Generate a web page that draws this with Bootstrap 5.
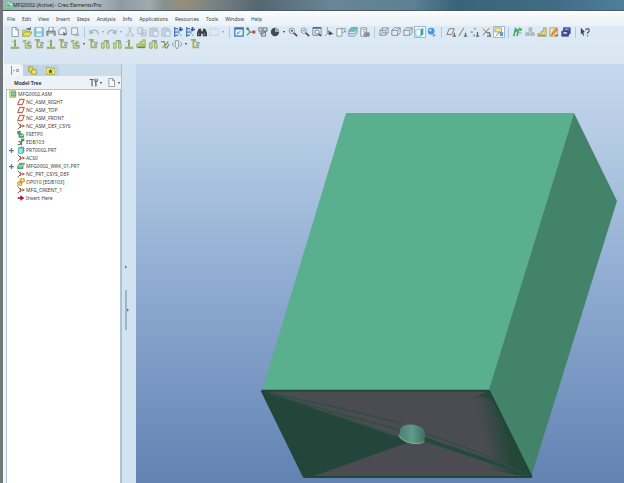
<!DOCTYPE html>
<html lang="en">
<head>
<meta charset="utf-8">
<meta name="viewport" content="width=device-width, initial-scale=1">
<title>MFG0002 (Active) - Creo Elements/Pro</title>
<link href="https://cdn.jsdelivr.net/npm/bootstrap@5.3.0/dist/css/bootstrap.min.css" rel="stylesheet">
<style>
body{font:5px/8px "Noto Sans","Open Sans",sans-serif;color:#333b42;background:#dce8f4;border-left:3px solid #71767a}
button{border:0;background:none;padding:0;color:inherit;font:inherit;line-height:1}
svg{display:block}
.titlebar{height:11px;padding-left:2px;color:#1c2226;border-bottom:1px solid #4b5b66;
 background:linear-gradient(90deg,#9fb2ba 0,#b4c0c4 14%,#8d9ba1 19%,#9fabb0 23.5%,#87908f 26%,#978d78 29.5%,#7d8582 33%,#65747b 38%,#556670 41%,#688596 53%,#5d8094 66%,#38647b 73%,#3f6c85 88%,#4f7e9b 100%)}
.titlebar h1{font-size:5px;line-height:10px;font-weight:400;margin:0}
.menubar{height:15px;padding-left:4px;gap:7px;background:linear-gradient(#fbfcfd,#e9f1f8)}
.menubar a{color:#3b4146;text-decoration:none;line-height:16px}
.tools{height:38px;padding:0 0 0 5px;border-left:1px solid #eef4fa;background:linear-gradient(#deebf6,#d8e6f2)}
.tools .line{height:12px}
.tb{width:12px;height:12px;flex:none}
.tb svg{width:10px;height:10px;margin:1px;opacity:.85}
.tb.on{background:#f8fcff;box-shadow:inset 0 0 0 1px #9bbbd8}
.more{width:6px;height:12px;flex:none}
.more::after,.drop::after{content:"";display:block;width:0;margin:auto;border:1px solid transparent;border-top:2px solid #333;border-bottom:0}
.rule{width:1px;height:11px;margin:0 3px;background:#b3c9dd;flex:none}
.faded{opacity:.45}
.side{width:133px;background:#cfe0ef;border-left:2px solid #f2f6f9;flex:none}
.panel{width:117px;border-right:1px solid #a9bfd3;background:#edf2f6}
.tabs{height:12px;background:#cbdcea}
.tab{width:18px;height:11px;background:#bed3e6;border-radius:2px 4px 0 0;display:flex;align-items:center;justify-content:center}
.tab.active{background:#f0f5f9;height:12px}
.tab svg{width:9px;height:9px}
.head{height:13px;padding:0 0 0 9px}
.head h2{font-size:5px;line-height:12px;font-weight:700;margin:0}
.drop{display:flex;align-items:center;width:14px;height:12px}
.drop svg{width:9px;height:9px}
.tree{margin:0 0 0 1px;padding:0 0 0 2px;list-style:none;background:#fff;border:1px solid #afc4d6;border-bottom:0}
.tree li{height:8px;display:flex;align-items:center;white-space:nowrap;color:#3d4247}
.tree svg{width:8px;height:8px;margin-right:1px;flex:none}
.twist{width:8px;height:8px;flex:none;display:flex;align-items:center}
.kid .twist svg{width:5px;height:5px;margin:0}
.sash{padding-top:201px;background:#d1e2f0}
.sash button{width:5px;display:block;margin-left:3px;color:#536d86}
.sash .grip{height:40px;margin-top:21px;border-left:2px solid #9db5ca}
.nub svg,.grip svg{width:2px;height:4px}
.view{background:linear-gradient(#c4d9ee 0,#b5cbe4 18%,#8ca9d0 55%,#6282b2 100%);overflow:hidden}
</style>
<script src="https://cdn.jsdelivr.net/npm/bootstrap@5.3.0/dist/js/bootstrap.bundle.min.js"></script>
</head>
<body class="d-flex flex-column min-vh-100 overflow-hidden">
<svg width="0" height="0" class="position-absolute" aria-hidden="true">
 <defs>
 <symbol id="new" viewBox="0 0 12 12"><path d="M2.500 .5h5l2.500 3v8h-7.500z" fill="#fff" stroke="#6a7c8e"/><path d="M7 .5v3h3" fill="none" stroke="#6a7c8e"/></symbol>
 <symbol id="open" viewBox="0 0 12 12"><path d="M0 11V4h4l1 1h4v2" fill="#e8d77c" stroke="#8c9830"/><path d="M0 11l3-5h9l-3 5z" fill="#e9df48" stroke="#8c8b20"/><path d="M5 3q2-3 5 0M10 0v3H7" fill="none" stroke="#333"/></symbol>
 <symbol id="save" viewBox="0 0 12 12"><path d="M1 1h10v10H1z" fill="#8ec9db" stroke="#3a90a5"/><path d="M3 1h6v4H3z" fill="#f7ffff"/><path d="M3 8h6v3H3z" fill="#e4f4f6"/></symbol>
 <symbol id="print" viewBox="0 0 12 12"><path d="M3 5l1-5h5l-1 5" fill="#fff" stroke="#666"/><path d="M1 5h10v5H1z" fill="#99a1a7" stroke="#4f5964"/><path d="M3 8h6v3H3z" fill="#ecefec"/></symbol>
 <symbol id="mail" viewBox="0 0 12 12"><path d="M1 9V4l3-3h5l1 5v3z" fill="#edf0f3" stroke="#687480"/><path d="M6 6l5 2-4 3z" fill="#526373"/></symbol>
 <symbol id="sheet" viewBox="0 0 12 12"><path d="M2 1h7v8H2z" fill="#edf4f7" stroke="#7a8b9b"/><path d="M5 8h6v3H5z" fill="#a1adb8"/></symbol>
 <symbol id="undo" viewBox="0 0 12 12"><path d="M2 7c2-5 8-4 9 1v1" fill="none" stroke="#4f6272" stroke-width="1.500"/><path d="M0 3l1 6 5-2z" fill="#4f6272"/></symbol>
 <symbol id="redo" viewBox="0 0 12 12"><path d="M10 7C8 2 2 3 1 8v1" fill="none" stroke="#4f6272" stroke-width="1.500"/><path d="M12 3l-1 6-5-2z" fill="#4f6272"/></symbol>
 <symbol id="cut" viewBox="0 0 12 12"><path d="M4 0l4 8M8 0L4 8" stroke="#596a7a"/><circle cx="3" cy="10" r="1.500" fill="none" stroke="#596a7a"/><circle cx="9" cy="10" r="1.500" fill="none" stroke="#596a7a"/></symbol>
 <symbol id="copy" viewBox="0 0 12 12"><path d="M1 1h6v7H1zM5 4h6v7H5z" fill="#dfe7ee" stroke="#5c6e80"/><path d="M6 7h4M6 9h4" stroke="#5c6e80"/></symbol>
 <symbol id="paste" viewBox="0 0 12 12"><path d="M1 2h9v9H1z" fill="#a8b5c1" stroke="#5c6e80"/><path d="M5 5h6v6H5zM4 0h3v3H4z" fill="#eef3f7" stroke="#5c6e80"/></symbol>
 <symbol id="regen" viewBox="0 0 12 12"><path d="M2 0v12M2 2h4M2 6h4M2 10h4" stroke="#2f62b2" stroke-width="1.500"/><path d="M5 4h3v4H5z" fill="#6ea9dc"/><path d="M9 0v5M7 3h5" stroke="#263b90" stroke-width="2"/><path d="M8 8l2 3" stroke="#579aa0"/></symbol>
 <symbol id="find" viewBox="0 0 12 12"><path d="M2 2h3v3h2V2h3l2 5v4H7V8H5v3H0V7z" fill="#1d232b"/><path d="M2 7v3M9 7v3" stroke="#7f8fa0"/></symbol>
 <symbol id="pick" viewBox="0 0 12 12"><path d="M1 2h10v8H1z" fill="none" stroke="#7c8c99" stroke-dasharray="2 1"/></symbol>
 <symbol id="repaint" viewBox="0 0 12 12"><path d="M1 1h10v10H1z" fill="#eaf6ff" stroke="#2463ae" stroke-width="1.500"/><path d="M1 2h10" stroke="#2457a8" stroke-width="2"/><path d="M9 4L4 9l-1 1 1-3z" fill="#277ccd"/></symbol>
 <symbol id="spin" viewBox="0 0 12 12"><path d="M1 1l4 5-4 4M5 6h4" stroke="#31935b" stroke-width="1.500" fill="none"/><circle cx="9.500" cy="6" r="2" fill="#ba3030"/><circle cx="2" cy="2" r="1.500" fill="#315e53"/></symbol>
 <symbol id="orient" viewBox="0 0 12 12"><path d="M1 1h4v4H1zM6 1h5v4H6zM4 6h5v5H4z" fill="#d1d9df" stroke="#4c5d69"/><path d="M2 7l3 2 5-5" stroke="#334758" fill="none"/></symbol>
 <symbol id="ball" viewBox="0 0 12 12"><circle cx="6" cy="6" r="5" fill="#262f3a"/><path d="M6 1a5 5 0 0 1 5 5H6z" fill="#91a1af"/></symbol>
 <symbol id="zin" viewBox="0 0 12 12"><circle cx="4.500" cy="4.500" r="3.200" fill="#f4faff" stroke="#61758a"/><path d="M7 7l4 4" stroke="#4b2730" stroke-width="2"/><path d="M3 4.500h3M4.500 3v3" stroke="#222"/></symbol>
 <symbol id="zout" viewBox="0 0 12 12"><circle cx="4.500" cy="4.500" r="3.200" fill="#f4faff" stroke="#61758a"/><path d="M7 7l4 4" stroke="#4b2730" stroke-width="2"/><path d="M3 4.500h3" stroke="#222"/></symbol>
 <symbol id="refit" viewBox="0 0 12 12"><path d="M1 1h10v9H1z" fill="#e3eef8" stroke="#496d97"/><path d="M1 1h10" stroke="#31577d" stroke-width="2"/><circle cx="6" cy="6" r="2.500" fill="#fff" stroke="#365d88"/><path d="M8 8l3 3" stroke="#222" stroke-width="1.500"/></symbol>
 <symbol id="axes" viewBox="0 0 12 12"><path d="M4 0v8h7M4 8l-3 3" fill="none" stroke="#6a7f8a"/><path d="M5 4l6 4-5 2z" fill="#243947"/></symbol>
 <symbol id="views" viewBox="0 0 12 12"><path d="M1 2h6v9H1z" fill="#fff" stroke="#6c7f90"/><path d="M7 2h4v4M8 7l2-2 2 2" stroke="#33506e" fill="none" stroke-dasharray="2 1"/></symbol>
 <symbol id="layer" viewBox="0 0 12 12"><path d="M1 5l3-4h7v6l-3 4H1z" fill="#d4ecec" stroke="#5c8e9f"/><path d="M1 5l3-4h7L8 5z" fill="#62bdb7" stroke="#4c8e9f"/><path d="M1 8h7l3-4" fill="none" stroke="#5c8e9f"/></symbol>
 <symbol id="mgr" viewBox="0 0 12 12"><path d="M1 1h7v10H1z" fill="#f6f7f6" stroke="#6d7880"/><path d="M3 3h4M3 5h4" stroke="#8a9aaa"/><path d="M5 7h6v4H5z" fill="#9aa8a8" stroke="#5a6870"/><path d="M7 9h3" stroke="#972f2f"/></symbol>
 <symbol id="cube" viewBox="0 0 12 12"><path d="M1 4l3-3h7v6l-3 3H1zM1 4h7v6M8 4l3-3M4 1v6h7M4 7l-3 3" fill="none" stroke="#71808a"/></symbol>
 <symbol id="hidden" viewBox="0 0 12 12"><path d="M1 4l3-3h7v6l-3 3H1zM1 4h7v6M8 4l3-3" fill="#e7eef3" stroke="#65747f"/></symbol>
 <symbol id="shade" viewBox="0 0 12 12"><path d="M1 3h6v8H1z" fill="#f6ffff" stroke="#52b4c3"/><path d="M7 3l3-2v8l-3 2z" fill="#1e9395"/><path d="M1 3l3-2h6L7 3z" fill="#b4ebed"/></symbol>
 <symbol id="blue" viewBox="0 0 12 12"><circle cx="5" cy="5" r="4" fill="#2489e3"/><circle cx="4" cy="4" r="1.500" fill="#b3e1ff"/><path d="M7 8l4 2-4 2z" fill="#7892a8"/></symbol>
 <symbol id="dplane" viewBox="0 0 12 12"><path d="M1 9l3-7h6L7 9z" fill="none" stroke="#8b6a55" stroke-width="1.200"/><path d="M8 11h4M10 7v4" stroke="#305f59" stroke-width="1.500"/></symbol>
 <symbol id="daxis" viewBox="0 0 12 12"><path d="M1 11L7 1" stroke="#776253" stroke-width="1.200"/><path d="M7 11h4M9 7v4" stroke="#305f59" stroke-width="1.500"/></symbol>
 <symbol id="dpoint" viewBox="0 0 12 12"><path d="M1 5l2 2M3 5L1 7M5 1l2 2M7 1L5 3M4 9l2 2M6 9l-2 2" stroke="#776253"/><path d="M7 11h4M9 6v5" stroke="#305f59" stroke-width="1.500"/></symbol>
 <symbol id="dcsys" viewBox="0 0 12 12"><path d="M1 10l8-9M1 2l5 5" stroke="#776253" stroke-width="1.200"/><path d="M6 11h5M6 7h3l1 4" stroke="#305f59" stroke-width="1.500" fill="none"/></symbol>
 <symbol id="note" viewBox="0 0 12 12"><path d="M1 1h8v5H1z" fill="#f4e08a" stroke="#9c9050"/><path d="M7 6h4v5H7z" fill="#568bc1"/><path d="M2 11l5-5" stroke="#456"/></symbol>
 <symbol id="play" viewBox="0 0 12 12"><path d="M1 11l2-9 3 3-1 6M3 5l6-3" stroke="#2d9f49" stroke-width="2" fill="none"/><path d="M7 1l4 2-3 2M7 7h3" fill="#34a8bd" stroke="#2f9e43"/></symbol>
 <symbol id="people" viewBox="0 0 12 12"><path d="M5 1h3v4H5zM1 7h4v3H1zM7 7h4v3H7z" fill="#c2cad0" stroke="#89949b"/></symbol>
 <symbol id="steps" viewBox="0 0 12 12"><path d="M1 11V8h4V5h3V1h3v10z" fill="#e2d274" stroke="#93904e"/><path d="M2 10h8" stroke="#2f7f8e"/></symbol>
 <symbol id="edit" viewBox="0 0 12 12"><path d="M1 1h9v10H1z" fill="#f5e6a0" stroke="#a09040"/><path d="M10 3L5 9l-2 1 1-3 4-5z" fill="#ef993c" stroke="#ab4e2d"/><path d="M7 9h4v2H7z" fill="#c84b35"/></symbol>
 <symbol id="disk" viewBox="0 0 12 12"><path d="M3 1h8v7H3z" fill="#34459c" stroke="#1e2a70"/><path d="M1 5h8v6H1z" fill="#26388d" stroke="#19235f"/><path d="M3 6h4v2H3zM5 2h4v1H5z" fill="#c7d3f2"/></symbol>
 <symbol id="help" viewBox="0 0 12 12"><path d="M1 1l5 5-2 .5L5 10l-1 .5-1.500-3L1 9z" fill="#222a5c"/><path d="M7 4q0-2 2-2t2 2-2 3v1M9 10v1" fill="none" stroke="#512b6b" stroke-width="1.500"/></symbol>
 <symbol id="mill1" viewBox="0 0 12 12"><path d="M1 9h10v2H1z" fill="#c2bb39"/><path d="M6 1v8" stroke="#558e3a" stroke-width="2"/><path d="M2 3h4v2" stroke="#b2b052" fill="none"/><path d="M1 11h10" stroke="#62803f"/></symbol>
 <symbol id="mill2" viewBox="0 0 12 12"><path d="M1 2l3 4v5h7V8H7V6l3-4" fill="#c8d690" stroke="#6e9b42"/><path d="M6 5h5M7 8h4" stroke="#467f68"/><path d="M2 2h3" stroke="#a69831" stroke-width="1.500"/></symbol>
 <symbol id="mill3" viewBox="0 0 12 12"><path d="M1 1h5v2H4v7h7" fill="none" stroke="#a5a239" stroke-width="2"/><path d="M7 4h4v2H8v2h3" fill="none" stroke="#4a8c6c"/></symbol>
 <symbol id="mill4" viewBox="0 0 12 12"><path d="M1 10V6h4V3h3V1h3v9z" fill="#d8cf53" stroke="#8a9b3b"/><path d="M2 10h9" stroke="#417f5b" stroke-width="2"/><path d="M5 7h5" stroke="#4f998d"/></symbol>
 <symbol id="mill5" viewBox="0 0 12 12"><path d="M1 5h4V2h3v3h3M2 5v6h3V6M8 5v6h3V6" fill="#dedb7c" stroke="#6e953d"/><path d="M7 2h3v3" fill="none" stroke="#396d84"/></symbol>
 <symbol id="turn" viewBox="0 0 12 12"><path d="M1 3h4l1 5 4-5M4 8l4 3 3-5" fill="none" stroke="#6e8051" stroke-width="1.500"/><path d="M2 9h4v2H2z" fill="#cbbb49"/></symbol>
 <symbol id="drill" viewBox="0 0 12 12"><path d="M4 2h4v7l-2 3-2-3z" fill="#edf1f0" stroke="#6b7d88"/><path d="M2 4L0 6l2 3M10 4l2 2-2 3" fill="none" stroke="#6b7d88"/></symbol>
 <symbol id="asm" viewBox="0 0 12 12"><path d="M1 1h9v10H1z" fill="#f0e275" stroke="#a89e36"/><path d="M4 3h6v6H4z" fill="#84cbc5" stroke="#348e91"/></symbol>
 <symbol id="plane" viewBox="0 0 12 12"><path d="M1 10l3-8h7l-3 8z" fill="#fff6f0" stroke="#a54736" stroke-width="1.400"/></symbol>
 <symbol id="csys" viewBox="0 0 12 12"><path d="M1 1l5 5-5 5M5 6h6M5 3v6" fill="none" stroke="#a34c39" stroke-width="1.400"/><path d="M8 4l3 2-3 2" fill="none" stroke="#6e4a48"/></symbol>
 <symbol id="fix" viewBox="0 0 12 12"><path d="M1 2h4v3l5 2v4H3V6H1z" fill="#5eaa80" stroke="#2a6b4a"/><path d="M5 8h5" stroke="#fff"/></symbol>
 <symbol id="mach" viewBox="0 0 12 12"><path d="M1 10h4V5H2M7 2v9" stroke="#526354" fill="none" stroke-width="1.500"/><path d="M6 1h5v4H6z" fill="#3c9560"/></symbol>
 <symbol id="part" viewBox="0 0 12 12"><path d="M2 3l2-2h7v8l-2 2H2z" fill="#41b9b8"/><path d="M2 3h7v8H2z" fill="#9ae7e2" stroke="#3ba5a8"/></symbol>
 <symbol id="work" viewBox="0 0 12 12"><path d="M1 6l3-4h8L9 6v4H1z" fill="#69b88f" stroke="#2f7d58"/><path d="M1 6h8l3-4" fill="none" stroke="#dff5e5"/></symbol>
 <symbol id="op" viewBox="0 0 12 12"><path d="M1 6h6v5H1zM5 1h6v5H5z" fill="#efd969" stroke="#b8802c"/><path d="M3 4l5 5" stroke="#c15e2d"/></symbol>
 <symbol id="ins" viewBox="0 0 12 12"><path d="M1 5h4V2l6 4-6 4V7H1z" fill="#a6152b"/></symbol>
 <symbol id="plus" viewBox="0 0 6 6"><path d="M0 3h6M3 0v6" stroke="#60788c" stroke-width="1.500"/></symbol>
 <symbol id="treetab" viewBox="0 0 12 12"><path d="M2 0v12M4 6h2M8 5h4M8 7h4" stroke="#66717c"/></symbol>
 <symbol id="foldtab" viewBox="0 0 12 12"><path d="M1 1h5l1 2v5H1z" fill="#ecdf42" stroke="#8d8d25"/><path d="M5 5h6v6H5z" fill="#f4e961" stroke="#8d8d25"/></symbol>
 <symbol id="favtab" viewBox="0 0 12 12"><path d="M0 2h5l1 1h6v8H0z" fill="#eee862" stroke="#9b9b35"/><path d="M6 4l1 2h2L7.500 7.500 8 10 6 8.500 4 10l.5-2.500L3 6h2z" fill="#465b23"/></symbol>
 <symbol id="tool" viewBox="0 0 12 12"><path d="M1 2h5M4 2v9M8 1v3l1 1v6M11 1v3l-1 1" fill="none" stroke="#595f62" stroke-width="1.500"/><path d="M8 7h2v4H8z" fill="#c0784b"/></symbol>
 <symbol id="nubr" viewBox="0 0 4 6"><path d="M0 0l4 3-4 3z" fill="currentColor"/></symbol>
 </defs>
</svg>

<header class="titlebar d-flex align-items-center">
 <svg width="8" height="8" viewBox="0 0 12 12" aria-hidden="true"><path d="M1 1h10v10H1z" fill="#e3f4e5" stroke="#5bae77"/><path d="M3 2v7h7M5 4v3h4M6 3h4" fill="none" stroke="#28a554" stroke-width="1.500"/></svg>
 <h1>MFG0002 (Active) - Creo Elements/Pro</h1>
</header>
<nav class="menubar d-flex" aria-label="Main menu">
 <a href="#">File</a><a href="#">Edit</a><a href="#">View</a><a href="#">Insert</a><a href="#">Steps</a><a href="#">Analysis</a><a href="#">Info</a><a href="#">Applications</a><a href="#">Resources</a><a href="#">Tools</a><a href="#">Window</a><a href="#">Help</a>
</nav>
<div class="tools" role="toolbar" aria-label="Tools">
 <div class="line d-flex align-items-center">
 <button class="tb" aria-label="New"><svg><use href="#new"/></svg></button><button class="tb" aria-label="Open"><svg><use href="#open"/></svg></button><button class="tb" aria-label="Save"><svg><use href="#save"/></svg></button><button class="tb" aria-label="Print"><svg><use href="#print"/></svg></button><button class="tb" aria-label="Send"><svg><use href="#mail"/></svg></button><button class="tb" aria-label="Attach"><svg><use href="#sheet"/></svg></button><i class="rule"></i>
 <button class="tb faded" aria-label="Undo"><svg><use href="#undo"/></svg></button><button class="more faded" aria-label="Undo list"></button><button class="tb faded" aria-label="Redo"><svg><use href="#redo"/></svg></button><button class="more faded" aria-label="Redo list"></button><button class="tb faded" aria-label="Cut"><svg><use href="#cut"/></svg></button><button class="tb faded" aria-label="Copy"><svg><use href="#copy"/></svg></button><button class="tb faded" aria-label="Paste"><svg><use href="#paste"/></svg></button><button class="tb faded" aria-label="Paste special"><svg><use href="#paste"/></svg></button><button class="tb" aria-label="Regenerate"><svg><use href="#regen"/></svg></button><button class="tb" aria-label="Regenerate manager"><svg><use href="#regen"/></svg></button><button class="tb" aria-label="Find"><svg><use href="#find"/></svg></button><button class="tb faded" aria-label="Select"><svg><use href="#pick"/></svg></button><button class="more faded" aria-label="Select list"></button><i class="rule"></i>
 <button class="tb" aria-label="Repaint"><svg><use href="#repaint"/></svg></button><button class="tb" aria-label="Spin center"><svg><use href="#spin"/></svg></button><button class="tb" aria-label="Orient mode"><svg><use href="#orient"/></svg></button><button class="tb" aria-label="Appearance"><svg><use href="#ball"/></svg></button><button class="more" aria-label="Appearance list"></button><button class="tb" aria-label="Zoom in"><svg><use href="#zin"/></svg></button><button class="tb" aria-label="Zoom out"><svg><use href="#zout"/></svg></button><button class="tb" aria-label="Refit"><svg><use href="#refit"/></svg></button><button class="tb" aria-label="Reorient"><svg><use href="#axes"/></svg></button><button class="tb" aria-label="Saved views"><svg><use href="#views"/></svg></button><button class="tb" aria-label="Layers"><svg><use href="#layer"/></svg></button><button class="tb" aria-label="View manager"><svg><use href="#mgr"/></svg></button><i class="rule"></i>
 <button class="tb" aria-label="Wireframe"><svg><use href="#cube"/></svg></button><button class="tb" aria-label="Hidden line"><svg><use href="#hidden"/></svg></button><button class="tb" aria-label="No hidden"><svg><use href="#hidden"/></svg></button><button class="tb on" aria-label="Shading"><svg><use href="#shade"/></svg></button><button class="tb" aria-label="Enhanced realism"><svg><use href="#blue"/></svg></button><i class="rule"></i>
 <button class="tb" aria-label="Datum planes"><svg><use href="#dplane"/></svg></button><button class="tb" aria-label="Datum axes"><svg><use href="#daxis"/></svg></button><button class="tb" aria-label="Datum points"><svg><use href="#dpoint"/></svg></button><button class="tb" aria-label="Coordinate systems"><svg><use href="#dcsys"/></svg></button><button class="tb on" aria-label="Annotations"><svg><use href="#note"/></svg></button><i class="rule"></i>
 <button class="tb" aria-label="Play path"><svg><use href="#play"/></svg></button><button class="tb" aria-label="Process"><svg><use href="#people"/></svg></button><button class="tb" aria-label="Step list"><svg><use href="#steps"/></svg></button><button class="tb" aria-label="Edit parameters"><svg><use href="#edit"/></svg></button><button class="tb" aria-label="Post process"><svg><use href="#disk"/></svg></button><i class="rule"></i>
 <button class="tb" aria-label="Help"><svg><use href="#help"/></svg></button>
 </div>
 <div class="line d-flex align-items-center">
 <button class="tb" aria-label="Face milling"><svg><use href="#mill1"/></svg></button><button class="tb" aria-label="Volume milling"><svg><use href="#mill2"/></svg></button><button class="tb" aria-label="Local milling"><svg><use href="#mill3"/></svg></button><button class="tb" aria-label="Surface milling"><svg><use href="#mill1"/></svg></button><button class="tb" aria-label="Profile milling"><svg><use href="#mill3"/></svg></button><button class="tb" aria-label="Pocketing"><svg><use href="#mill2"/></svg></button><button class="more" aria-label="Milling list"></button><button class="tb" aria-label="Trajectory"><svg><use href="#mill3"/></svg></button><button class="tb" aria-label="Roughing"><svg><use href="#mill5"/></svg></button><button class="tb" aria-label="Re-roughing"><svg><use href="#mill5"/></svg></button><button class="tb" aria-label="Finishing"><svg><use href="#mill1"/></svg></button><button class="tb" aria-label="Corner finishing"><svg><use href="#mill4"/></svg></button><button class="tb" aria-label="Engraving"><svg><use href="#mill5"/></svg></button><button class="tb" aria-label="Turning"><svg><use href="#turn"/></svg></button><button class="tb" aria-label="Drilling"><svg><use href="#drill"/></svg></button><button class="more" aria-label="Drilling list"></button><button class="tb" aria-label="Manual cycle"><svg><use href="#mill3"/></svg></button>
 </div>
</div>
<main class="d-flex flex-grow-1">
 <aside class="side d-flex">
 <section class="panel d-flex flex-column">
 <div class="tabs d-flex align-items-end"><button class="tab active" aria-label="Model tree"><svg><use href="#treetab"/></svg></button><button class="tab" aria-label="Folder browser"><svg><use href="#foldtab"/></svg></button><button class="tab" aria-label="Favorites"><svg><use href="#favtab"/></svg></button></div>
 <div class="head d-flex align-items-center"><h2 class="me-auto">Model Tree</h2><button class="drop me-1" aria-label="Settings"><svg><use href="#tool"/></svg></button><button class="drop" aria-label="Show"><svg><use href="#new"/></svg></button></div>
 <ul class="tree flex-grow-1">
 <li><svg><use href="#asm"/></svg>MFG0002.ASM</li>
 <li class="kid"><span class="twist"></span><svg><use href="#plane"/></svg>NC_ASM_RIGHT</li>
 <li class="kid"><span class="twist"></span><svg><use href="#plane"/></svg>NC_ASM_TOP</li>
 <li class="kid"><span class="twist"></span><svg><use href="#plane"/></svg>NC_ASM_FRONT</li>
 <li class="kid"><span class="twist"></span><svg><use href="#csys"/></svg>NC_ASM_DEF_CSYS</li>
 <li class="kid"><span class="twist"></span><svg><use href="#fix"/></svg>FSETP0</li>
 <li class="kid"><span class="twist"></span><svg><use href="#mach"/></svg>EDB103</li>
 <li class="kid"><button class="twist" aria-label="Expand PRT0002"><svg><use href="#plus"/></svg></button><svg><use href="#part"/></svg>PRT0002.PRT</li>
 <li class="kid"><span class="twist"></span><svg><use href="#csys"/></svg>ACS0</li>
 <li class="kid"><button class="twist" aria-label="Expand MFG0002_WRK_01"><svg><use href="#plus"/></svg></button><svg><use href="#work"/></svg>MFG0002_WRK_01.PRT</li>
 <li class="kid"><span class="twist"></span><svg><use href="#csys"/></svg>NC_PRT_CSYS_DEF</li>
 <li class="kid"><span class="twist"></span><svg><use href="#op"/></svg>OP010 [EDB103]</li>
 <li class="kid"><span class="twist"></span><svg><use href="#csys"/></svg>MFG_ORIENT_1</li>
 <li class="kid"><span class="twist"></span><svg><use href="#ins"/></svg>Insert Here</li>
 </ul>
 </section>
 <div class="sash flex-grow-1"><button class="nub" aria-label="Collapse panel"><svg><use href="#nubr"/></svg></button><button class="grip" aria-label="Resize panel"><svg><use href="#nubr"/></svg></button></div>
 </aside>
 <section class="view flex-grow-1" aria-label="Model view">
 <svg viewBox="0 0 488 419" width="100%" role="img" aria-label="Workpiece block">
 <defs><linearGradient id="edge" x1="0" x2="1" y1=".25" y2="0"><stop offset=".2" stop-color="#264639" stop-opacity="0"/><stop offset=".55" stop-color="#264639"/></linearGradient>
 <linearGradient id="cyl"><stop offset="0" stop-color="#4a8070"/><stop offset=".5" stop-color="#609b89"/><stop offset="1" stop-color="#3f6c60"/></linearGradient></defs>
 <path d="M210 49h228l-85 278H126z" fill="#5ab08e"/>
 <path d="M438 49l43 88-86 276-42-87z" fill="#42836a"/>
 <g transform="translate(114 306) scale(.33333)">
 <path d="M35 61H717L845 323H162z" fill="#4a4c51"/>
 <path d="M35 61L445 203 470 219 185 320H162z" fill="#24463a"/>
 <path d="M717 62L670 85 640 130 720 300 845 322z" fill="url(#edge)"/>
 <path d="M664 86L717 62 730 90 690 78z" fill="#264639"/>
 <path d="M50 67L250 110 455 160M60 72L265 131 450 180M230 128L450 202M525 190L680 245 840 318M525 215L700 268 840 318" fill="none" stroke="#2b5040" stroke-width="4"/>
 <path d="M525 202L700 262 840 318 690 270 525 212z" fill="#22493a"/>
 <path d="M452 175q8-15 40-11 28 5 34 24l-4 25q-7 10-34 8-30-4-41-20z" fill="url(#cyl)"/>
 <path d="M446 194q12 22 43 26 25 3 34-6" fill="none" stroke="#78ad9b" stroke-width="3"/>
 <path d="M35 62H717M162 321H845M35 62L162 321M717 62L845 321" fill="none" stroke="#21473b" stroke-width="6"/>
 </g>
 </svg>
 </section>
</main>
</body>
</html>
